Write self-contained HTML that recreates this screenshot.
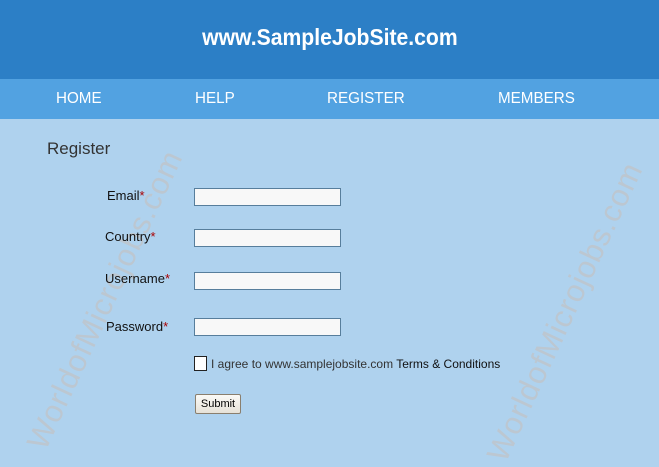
<!DOCTYPE html>
<html><head><style>
body{margin:0;width:659px;height:464px;overflow:hidden;background:#afd2ee;font-family:"Liberation Sans",sans-serif;position:relative}
.hd{position:absolute;left:0;top:0;width:659px;height:79px;background:#2c7fc6;color:#fff;font-size:23px;font-weight:bold;text-align:center;line-height:74px}
.hd span{display:inline-block;transform:scaleX(0.92)}
.nav{position:absolute;left:0;top:79px;width:659px;height:40px;background:#52a2e1;color:#fff;font-size:16px}
.nav span{position:absolute;top:11px;transform:scaleX(0.95);transform-origin:0 0}
.wm{position:absolute;color:#bcc7d1;font-size:31px;white-space:nowrap;transform-origin:0 0;transform:rotate(-65deg);letter-spacing:1px}
.t{position:absolute;font-size:13px;color:#111}
.t b{color:#a00;font-weight:normal}
.in{position:absolute;left:194px;width:145px;height:16px;border:1px solid #577e9c;background:#f8f8f8}
</style></head><body>
<div class="wm" style="left:20px;top:440px">WorldofMicrojobs.com</div>
<div class="wm" style="left:480px;top:452px">WorldofMicrojobs.com</div>
<div class="hd"><span>www.SampleJobSite.com</span></div>
<div class="nav"><span style="left:56px">HOME</span><span style="left:195px">HELP</span><span style="left:327px">REGISTER</span><span style="left:498px">MEMBERS</span></div>
<div style="position:absolute;left:47px;top:139px;font-size:17px;color:#333">Register</div>
<div class="t" style="left:107px;top:188px">Email<b>*</b></div>
<div class="t" style="left:105px;top:229px">Country<b>*</b></div>
<div class="t" style="left:105px;top:271px">Username<b>*</b></div>
<div class="t" style="left:106px;top:319px">Password<b>*</b></div>
<div class="in" style="top:188px"></div>
<div class="in" style="top:229px"></div>
<div class="in" style="top:272px"></div>
<div class="in" style="top:318px"></div>
<div style="position:absolute;left:194px;top:356px;width:11px;height:13px;border:1px solid #222;background:#fff"></div>
<div class="t" style="left:211px;top:357px;font-size:12px;color:#333">I agree to www.samplejobsite.com <span style="color:#111">Terms &amp; Conditions</span></div>
<div style="position:absolute;left:195px;top:394px;width:44px;height:18px;border:1px solid #8a7f6e;border-radius:2px;background:linear-gradient(#fbfaf6,#e6e2d8);font-size:11px;text-align:center;line-height:18px;color:#000">Submit</div>
</body></html>
